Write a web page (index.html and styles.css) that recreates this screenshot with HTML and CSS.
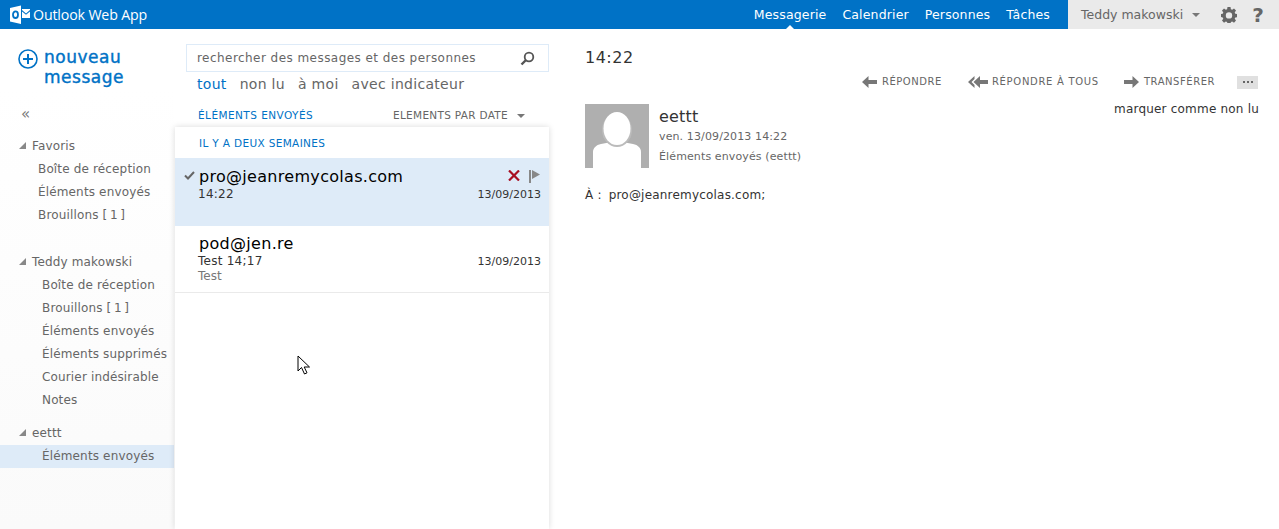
FILE: index.html
```html
<!DOCTYPE html>
<html lang="fr">
<head>
    <meta charset="UTF-8">
    <meta name="viewport" content="width=device-width, initial-scale=1.0">
    <title>Outlook Web App</title>
    <link rel="stylesheet" href="styles.css">
</head>
<body>
    <header class="topbar">
        <div class="brand">
            <svg class="brand-icon" width="20" height="19" viewBox="0 0 20 19">
                <path d="M0 3 11 .5V19L0 16.500z" fill="#fff"/>
                <path d="M12 4h8v1l-4 3.500L12 5z M12 6.500l4 3.300 4-3.300V13h-8z" fill="#fff"/>
                <ellipse cx="5.500" cy="9.700" rx="2.500" ry="3.300" fill="none" stroke="#0072c6" stroke-width="1.800"/>
            </svg>
            <span class="brand-name">Outlook Web App</span>
        </div>
        <nav class="apps">
            <a class="app active">Messagerie</a>
            <a class="app">Calendrier</a>
            <a class="app">Personnes</a>
            <a class="app">Tâches</a>
        </nav>
        <div class="user">
            <span class="user-name">Teddy makowski</span>
            <span class="caret user-caret"></span>
            <svg class="gear" width="16" height="16" viewBox="0 0 16 16">
                <path fill="#666" fill-rule="evenodd" d="M6.500 0h3l.4 2.200 1.300.6L13 1.500l2 2.100-1.300 1.800.6 1.300 2.200.4v3l-2.200.4-.6 1.300 1.300 1.800-2 2.100-1.800-1.300-1.300.6-.4 2.200h-3l-.4-2.200-1.300-.6L3 15.700l-2-2.100 1.300-1.800-.6-1.300L0 10.100v-3l1.700-.4.600-1.300L1 3.600l2-2.100 1.800 1.300 1.300-.6zM8 5.200a3.200 3.200 0 1 0 0 6.400 3.200 3.200 0 0 0 0-6.400z"/>
            </svg>
            <span class="help">?</span>
        </div>
    </header>

    <div class="main">
        <aside class="sidebar">
            <div class="compose">
                <svg class="compose-icon" width="20" height="20" viewBox="0 0 20 20">
                    <circle cx="10" cy="10" r="9" fill="none" stroke="#0072c6" stroke-width="1.600"/>
                    <path d="M10 5v10M5 10h10" stroke="#0072c6" stroke-width="2"/>
                </svg>
                <span class="compose-label">nouveau<br>message</span>
            </div>
            <div class="collapse">«</div>

            <div class="folder-group favs">
                <div class="group-title"><span class="tri"></span>Favoris</div>
                <div class="folder">Boîte de réception</div>
                <div class="folder">Éléments envoyés</div>
                <div class="folder">Brouillons [&thinsp;1&thinsp;]</div>
            </div>
            <div class="folder-group account">
                <div class="group-title"><span class="tri"></span>Teddy makowski</div>
                <div class="folder">Boîte de réception</div>
                <div class="folder">Brouillons [&thinsp;1&thinsp;]</div>
                <div class="folder">Éléments envoyés</div>
                <div class="folder">Éléments supprimés</div>
                <div class="folder">Courier indésirable</div>
                <div class="folder">Notes</div>
            </div>
            <div class="folder-group account shared">
                <div class="group-title"><span class="tri"></span>eettt</div>
                <div class="folder selected">Éléments envoyés</div>
            </div>
        </aside>

        <section class="middle">
            <div class="search">
                <span class="search-text">rechercher des messages et des personnes</span>
                <svg width="15" height="15" viewBox="0 0 15 15">
                    <circle cx="9" cy="6" r="4.300" fill="none" stroke="#555" stroke-width="1.800"/>
                    <path d="M6 9l-4.500 4.500" stroke="#555" stroke-width="2.400"/>
                </svg>
            </div>
            <div class="filters">
                <a class="filter on">tout</a>
                <a class="filter">non lu</a>
                <a class="filter">à moi</a>
                <a class="filter">avec indicateur</a>
            </div>
            <div class="list-head">
                <span class="list-folder">ÉLÉMENTS ENVOYÉS</span>
                <span class="list-sort">ELEMENTS PAR DATE<span class="caret sort-caret"></span></span>
            </div>
            <div class="list">
                <div class="list-group">IL Y A DEUX SEMAINES</div>
                <div class="msg msg-selected">
                    <svg class="check" width="11" height="9" viewBox="0 0 11 9">
                        <path d="M1 4.500l3 3L10 1" fill="none" stroke="#666" stroke-width="2"/>
                    </svg>
                    <div class="msg-from">pro@jeanremycolas.com</div>
                    <div class="msg-row"><span class="msg-subject">14:22</span><span class="msg-date">13/09/2013</span></div>
                    <div class="msg-actions">
                        <svg width="12" height="11" viewBox="0 0 12 11">
                            <path d="M1 .5l10 10M11 .5l-10 10" stroke="#a80f22" stroke-width="2.200"/>
                        </svg>
                        <svg width="12" height="13" viewBox="0 0 12 13">
                            <path d="M1 0h2v13H1z" fill="#888"/>
                            <path d="M4 0l8 4.500L4 9z" fill="#888"/>
                        </svg>
                    </div>
                </div>
                <div class="msg">
                    <div class="msg-from">pod@jen.re</div>
                    <div class="msg-row"><span class="msg-subject">Test 14;17</span><span class="msg-date">13/09/2013</span></div>
                    <div class="msg-preview">Test</div>
                </div>
            </div>
        </section>

        <section class="reading">
            <h1 class="subject">14:22</h1>
            <div class="actions">
                <span class="action">
                    <svg width="15" height="12" viewBox="0 0 15 12"><path d="M6.500 0L0 6l6.500 6V8H15V4H6.500z" fill="#777"/></svg>
                    RÉPONDRE
                </span>
                <span class="action action-all">
                    <svg width="20" height="12" viewBox="0 0 20 12"><path d="M6.500 0L0 6l6.500 6V9L3.500 6l3-3zM12 0L5.500 6l6.500 6V8h8V4h-8z" fill="#777"/></svg>
                    RÉPONDRE À TOUS
                </span>
                <span class="action">
                    <svg width="15" height="12" viewBox="0 0 15 12"><path d="M8.500 0L15 6l-6.500 6V8H0V4h8.500z" fill="#777"/></svg>
                    TRANSFÉRER
                </span>
                <span class="more"><i></i><i></i><i></i></span>
            </div>
            <div class="mark-unread">marquer comme non lu</div>
            <div class="sender">
                <svg class="avatar" width="64" height="64" viewBox="0 0 64 64">
                    <rect width="64" height="64" fill="#afafaf"/>
                    <path d="M8 64V48c0-4 3-7 8-8l8-1.500h16l8 1.500c5 1 8 4 8 8v16z" fill="#fff"/>
                    <ellipse cx="32" cy="26" rx="15" ry="17" fill="#bbb"/>
                    <ellipse cx="32" cy="24.500" rx="13.500" ry="16.500" fill="#fff"/>
                </svg>
                <div class="sender-info">
                    <div class="sender-name">eettt</div>
                    <div class="sender-meta">ven. 13/09/2013 14:22</div>
                    <div class="sender-meta">Éléments envoyés (eettt)</div>
                </div>
            </div>
            <div class="recipients"><span>À :</span><span>pro@jeanremycolas.com;</span></div>
        </section>
    </div>

    <svg class="cursor" width="14" height="21" viewBox="0 0 14 21">
        <path d="M1 1v15l3.500-3.500L7.500 19l2.500-1.200-2.800-5.800H12.500z" fill="#fff" stroke="#000" stroke-width="1"/>
    </svg>
</body>
</html>
```

FILE: styles.css
```css
html, body {
    height: 100%;
}
body {
    margin: 0;
    overflow: hidden;
    font-family: "DejaVu Sans", sans-serif;
    font-size: 12px;
    color: #333;
    background-color: white;
}

/* top bar */
.topbar {
    display: flex;
    height: 29px;
    background-color: #0072c6;
    color: white;
}
.brand {
    display: flex;
    align-items: center;
    padding-left: 10px;
    flex: 1;
}
.brand-icon {
    margin-right: 3px;
}
.brand-name {
    font-family: "Open Sans", sans-serif;
    font-size: 14.200px;
    letter-spacing: -0.15px;
}
.apps {
    display: flex;
    align-items: center;
    gap: 16px;
    padding-right: 18px;
}
.app {
    position: relative;
    font-size: 12.500px;
    letter-spacing: 0.15px;
    line-height: 29px;
}
.app.active::after {
    content: "";
    position: absolute;
    left: 50%;
    bottom: 0;
    margin-left: -4px;
    border-left: 4px solid transparent;
    border-right: 4px solid transparent;
    border-bottom: 4px solid white;
}
.user {
    display: flex;
    align-items: center;
    width: 211px;
    box-sizing: border-box;
    padding-left: 13px;
    background-color: #eaeaea;
    color: #666;
}
.user-name {
    font-size: 12.500px;
}
.caret {
    display: inline-block;
    border-left: 4px solid transparent;
    border-right: 4px solid transparent;
    border-top: 4px solid #777;
}
.user-caret {
    margin-left: 9px;
}
.gear {
    margin-left: 21px;
}
.help {
    margin-left: 15px;
    font-size: 20px;
    font-weight: bold;
    color: #666;
}

.main {
    display: flex;
    height: 500px;
}

/* left folders */
.sidebar {
    width: 174px;
    flex-shrink: 0;
    background: linear-gradient(to bottom, white 0, white 60px, #fafafa 100%);
}
.compose {
    display: flex;
    padding: 18px 0 0 18px;
    color: #0072c6;
}
.compose-icon {
    margin: 2px 6px 0 0;
    flex-shrink: 0;
}
.compose-label {
    font-size: 17px;
    line-height: 20px;
    letter-spacing: 0.5px;
    -webkit-text-stroke: 0.4px #0072c6;
}
.collapse {
    margin: 18px 0 0 21px;
    font-size: 15px;
    line-height: 18px;
    color: #777;
}
.folder-group {
    color: #666;
    letter-spacing: 0.15px;
}
.favs {
    margin-top: 11px;
}
.account {
    margin-top: 23px;
}
.account.shared {
    margin-top: 9px;
}
.group-title {
    display: flex;
    align-items: center;
    height: 23px;
    padding: 0 0 1px 19px;
}
.tri {
    width: 0;
    height: 0;
    margin-right: 6px;
    border-left: 7px solid transparent;
    border-bottom: 7px solid #888;
}
.folder {
    height: 23px;
    line-height: 23px;
    padding-left: 38px;
    white-space: nowrap;
}
.account .folder {
    padding-left: 42px;
}
.folder.selected {
    background-color: #deebf8;
}

/* message list */
.middle {
    width: 376px;
    flex-shrink: 0;
    display: flex;
    flex-direction: column;
}
.search {
    display: flex;
    justify-content: space-between;
    align-items: center;
    box-sizing: border-box;
    height: 28px;
    margin: 15px 0 0 12px;
    width: 363px;
    padding: 0 13px 0 10px;
    border: 1px solid #deebf8;
    color: #666;
}
.search-text {
    font-size: 12px;
    letter-spacing: 0.45px;
}
.filters {
    display: flex;
    gap: 13px;
    margin: 3px 0 0 23px;
    font-size: 14px;
    letter-spacing: 0.3px;
    line-height: 18px;
    color: #666;
}
.filter.on {
    color: #0072c6;
}
.list-head {
    display: flex;
    justify-content: space-between;
    margin: 15px 0 0 24px;
    padding-right: 25px;
    font-size: 10.500px;
    line-height: 14px;
}
.list-folder {
    color: #0072c6;
    letter-spacing: 0.45px;
}
.list-sort {
    color: #666;
    letter-spacing: 0.3px;
}
.sort-caret {
    margin-left: 9px;
    vertical-align: 1px;
}
.list {
    flex: 1;
    width: 374px;
    margin: 5px 0 0 1px;
    box-shadow: 0 0 6px rgba(0, 0, 0, 0.15);
}
.list-group {
    height: 31px;
    box-sizing: border-box;
    padding: 9px 0 0 24px;
    font-size: 10.500px;
    letter-spacing: 0.35px;
    line-height: 14px;
    color: #0072c6;
}
.msg {
    position: relative;
    height: 67px;
    box-sizing: border-box;
    padding: 8px 8px 0 23px;
    border-bottom: 1px solid #eaeaea;
}
.msg-selected {
    height: 68px;
    padding-top: 9px;
    background-color: #deebf8;
    border-bottom-color: #deebf8;
}
.check {
    position: absolute;
    left: 9px;
    top: 13px;
}
.msg-from {
    margin-left: 1px;
    font-size: 16px;
    letter-spacing: 0.3px;
    line-height: 20px;
    color: black;
}
.msg-row {
    display: flex;
    justify-content: space-between;
    align-items: center;
    line-height: 15px;
}
.msg-subject {
    letter-spacing: 0.25px;
}
.msg-date {
    font-size: 11px;
}
.msg-preview {
    line-height: 15px;
    color: #777;
}
.msg-actions {
    position: absolute;
    right: 9px;
    top: 12px;
    display: flex;
    gap: 8px;
}

/* reading pane */
.reading {
    flex: 1;
    padding: 19px 21px 0 35px;
}
.subject {
    margin: 0;
    font-size: 16px;
    font-weight: normal;
    letter-spacing: 0.5px;
    line-height: 20px;
}
.actions {
    display: flex;
    justify-content: flex-end;
    align-items: center;
    gap: 25px;
    margin-top: 7px;
    font-size: 10px;
    letter-spacing: 0.55px;
    line-height: 14px;
    color: #666;
}
.action {
    display: flex;
    align-items: center;
    gap: 5px;
}
.action-all {
    gap: 4px;
    margin-left: 1px;
    letter-spacing: 0.7px;
}
.more {
    display: flex;
    align-items: center;
    justify-content: center;
    gap: 2px;
    width: 21px;
    height: 13px;
    margin-left: -3px;
    background-color: #e0e0e0;
}
.more i {
    width: 2px;
    height: 2px;
    background-color: #666;
}
.mark-unread {
    margin: 13px -1px 0 0;
    text-align: right;
    letter-spacing: 0.2px;
    line-height: 15px;
}
.sender {
    display: flex;
    margin-top: -13px;
}
.avatar {
    flex-shrink: 0;
}
.sender-info {
    margin-left: 10px;
    padding-top: 2px;
}
.sender-name {
    font-size: 16px;
    letter-spacing: 0.2px;
    line-height: 22px;
}
.sender-meta {
    margin-bottom: 2px;
    font-size: 11px;
    letter-spacing: 0.12px;
    line-height: 18px;
    color: #666;
}
.recipients {
    display: flex;
    gap: 7px;
    margin-top: 19px;
    letter-spacing: 0.2px;
    line-height: 16px;
}

/* mouse pointer caught in the screenshot */
.cursor {
    position: absolute;
    left: 297px;
    top: 355px;
}
```
